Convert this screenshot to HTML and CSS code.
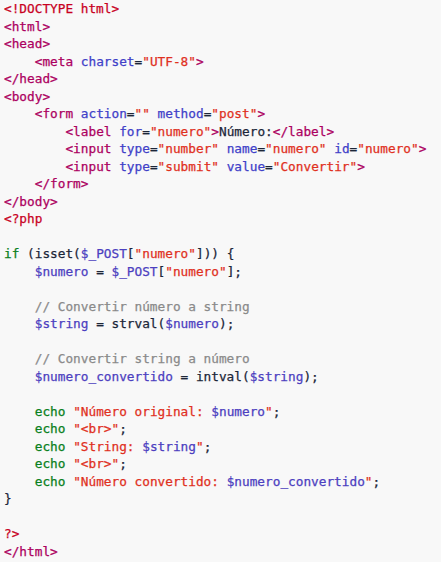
FILE: index.html
```html
<!DOCTYPE html>
<html lang="es">
<head>
<meta charset="UTF-8">
<link rel="stylesheet" href="styles.css">
</head>
<body>
<pre class="code"><span class="dt">&lt;!DOCTYPE html&gt;</span>
<span class="tg">&lt;html&gt;</span>
<span class="tg">&lt;head&gt;</span>
    <span class="tg">&lt;meta</span> <span class="at">charset</span>=<span class="st">"UTF-8"</span><span class="tg">&gt;</span>
<span class="tg">&lt;/head&gt;</span>
<span class="tg">&lt;body&gt;</span>
    <span class="tg">&lt;form</span> <span class="at">action</span>=<span class="st">""</span> <span class="at">method</span>=<span class="st">"post"</span><span class="tg">&gt;</span>
        <span class="tg">&lt;label</span> <span class="at">for</span>=<span class="st">"numero"</span><span class="tg">&gt;</span>Número:<span class="tg">&lt;/label&gt;</span>
        <span class="tg">&lt;input</span> <span class="at">type</span>=<span class="st">"number"</span> <span class="at">name</span>=<span class="st">"numero"</span> <span class="at">id</span>=<span class="st">"numero"</span><span class="tg">&gt;</span>
        <span class="tg">&lt;input</span> <span class="at">type</span>=<span class="st">"submit"</span> <span class="at">value</span>=<span class="st">"Convertir"</span><span class="tg">&gt;</span>
    <span class="tg">&lt;/form&gt;</span>
<span class="tg">&lt;/body&gt;</span>
<span class="dt">&lt;?php</span>

<span class="kw">if</span> (isset(<span class="vr">$_POST</span>[<span class="st">"numero"</span>])) {
    <span class="vr">$numero</span> = <span class="vr">$_POST</span>[<span class="st">"numero"</span>];

    <span class="cm">// Convertir número a string</span>
    <span class="vr">$string</span> = strval(<span class="vr">$numero</span>);

    <span class="cm">// Convertir string a número</span>
    <span class="vr">$numero_convertido</span> = intval(<span class="vr">$string</span>);

    <span class="kw">echo</span> <span class="st">"Número original: </span><span class="vr">$numero</span><span class="st">"</span>;
    <span class="kw">echo</span> <span class="st">"&lt;br&gt;"</span>;
    <span class="kw">echo</span> <span class="st">"String: </span><span class="vr">$string</span><span class="st">"</span>;
    <span class="kw">echo</span> <span class="st">"&lt;br&gt;"</span>;
    <span class="kw">echo</span> <span class="st">"Número convertido: </span><span class="vr">$numero_convertido</span><span class="st">"</span>;
}

<span class="dt">?&gt;</span>
<span class="tg">&lt;/html&gt;</span></pre>
</body>
</html>
```
FILE: styles.css
```css
html, body {
  margin: 0;
  padding: 0;
  background: #f8f8f8;
}

.code {
  margin: 0;
  padding: 0 0 0 4px;
  font-family: "DejaVu Sans Mono", "Liberation Mono", monospace;
  font-size: 12.75px;
  line-height: 17.5px;
  color: #1c2638;
  white-space: pre;
  -webkit-text-stroke: 0.25px currentColor;
}

.dt { color: #c8001e; }
.tg { color: #ac0060; }
.at { color: #4040c8; }
.st { color: #e0301e; }
.kw { color: #0a8020; }
.vr { color: #4c40c0; }
.cm { color: #8a8a8a; }
```
